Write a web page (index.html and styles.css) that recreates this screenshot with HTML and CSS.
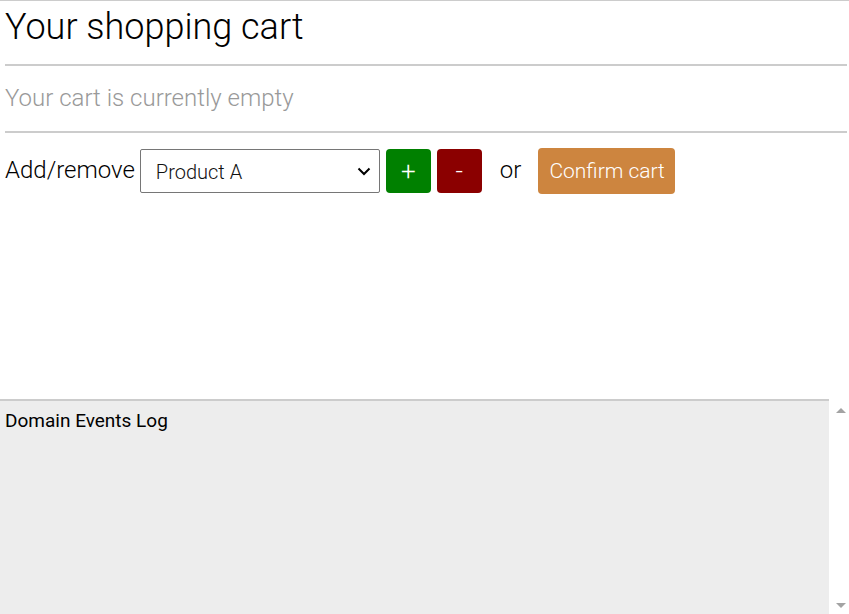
FILE: index.html
```html
<!DOCTYPE html>
<html>
<head>
<meta charset="utf-8">
<link rel="stylesheet" href="styles.css">
</head>
<body>
<div class="page">
  <main class="cart">
    <h1 class="title">Your shopping cart</h1>
    <hr class="rule">
    <p class="empty">Your cart is currently empty</p>
    <hr class="rule">
    <div class="controls">
      <span class="label">Add/remove</span>
      <div class="select">
        <span class="select-text">Product A</span>
        <svg class="chev" width="14" height="9" viewBox="0 0 14 9"><path d="M1.5 1.5 L7 7 L12.5 1.5" fill="none" stroke="#000" stroke-width="2"/></svg>
      </div>
      <button class="btn add">+</button>
      <button class="btn remove">-</button>
      <span class="or">or</span>
      <button class="confirm">Confirm cart</button>
    </div>
  </main>
  <section class="log">
    <div class="log-body">Domain Events Log</div>
    <div class="scrollbar">
      <span class="arrow up"></span>
      <span class="arrow down"></span>
    </div>
  </section>
</div>
</body>
</html>
```
FILE: styles.css
```css
html, body { margin: 0; padding: 0; }
body { font-family: Roboto, "Noto Sans", sans-serif; background: #fff; color: #000; }
.page { height: 614px; display: flex; flex-direction: column; border-top: 1px solid #ccc; box-sizing: border-box; overflow: hidden; }
.cart { flex: 1; padding: 0 2px 0 5px; }
.title { margin: 0; font-weight: 300; font-size: 36px; line-height: 52px; padding-top: 0; }
.rule { margin: 11px 0 0 0; border: 0; height: 2px; background: #ccc; }
.empty { margin: 0; color: #999; font-weight: 300; font-size: 24px; line-height: 30px; padding: 17px 0 7px; }
.controls { display: flex; align-items: center; margin-top: 15px; }
.label { font-weight: 300; font-size: 24px; margin-right: 5px; margin-top: -2px; }
.select { width: 240px; height: 44px; box-sizing: border-box; border: 1px solid #767676; border-radius: 2px; display: flex; align-items: center; justify-content: space-between; padding: 0 8px 0 15px; }
.select-text { font-size: 20px; font-weight: 300; padding-top: 1px; color: #111; }
.btn { width: 45px; height: 44px; border: 0; border-radius: 4px; color: #fff; font-family: Roboto, sans-serif; font-weight: 300; font-size: 26px; padding: 0; margin-left: 6px; }
.add { background: #008000; }
.remove { background: #8b0000; }
.or { font-weight: 300; font-size: 24px; margin: -2px 17px 0 18px; }
.confirm { height: 46px; padding: 0 10px 0 11px; border: 0; border-radius: 4px; background: #cd853f; color: #fff; font-family: Roboto, sans-serif; font-weight: 300; font-size: 21px; }
.log { height: 215px; display: flex; flex-shrink: 0; }
.log-body { flex: 1; background: #ededed; border-top: 2px solid #ccc; padding: 8px 5px; font-size: 19px; }
.scrollbar { width: 20px; display: flex; flex-direction: column; justify-content: space-between; align-items: center; padding: 9px 0 6px 4px; box-sizing: border-box; }
.arrow { width: 0; height: 0; border-left: 5px solid transparent; border-right: 5px solid transparent; }
.up { border-bottom: 5px solid #a3a3a3; }
.down { border-top: 5px solid #a3a3a3; }
```
